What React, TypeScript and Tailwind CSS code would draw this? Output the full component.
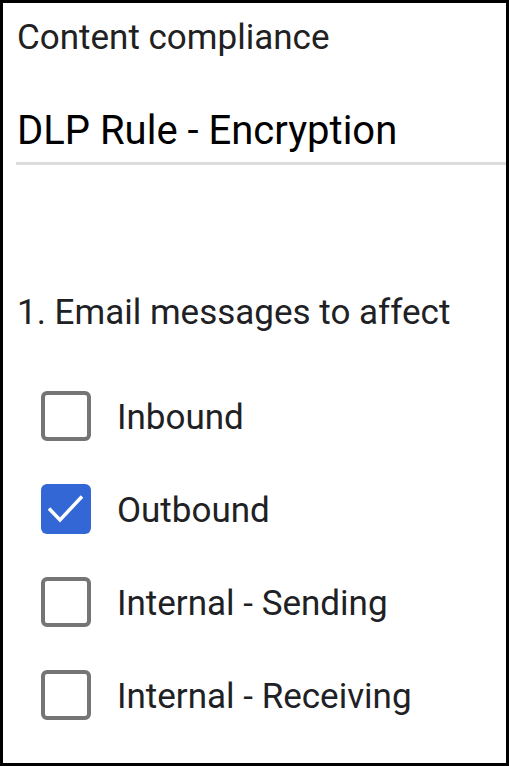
import React from "react";

const options = [
  { label: "Inbound", checked: false },
  { label: "Outbound", checked: true },
  { label: "Internal - Sending", checked: false },
  { label: "Internal - Receiving", checked: false },
];

function Checkbox({ checked }: { checked: boolean }) {
  if (checked) {
    return (
      <div className="w-[50px] h-[50px] rounded-[6px] bg-[#3367d6] flex items-center justify-center shrink-0">
        <svg width="50" height="50" viewBox="0 0 50 50" fill="none">
          <path d="M8 24.5 L19 36 L41 12.5" stroke="#fff" strokeWidth="3.5" />
        </svg>
      </div>
    );
  }
  return (
    <div className="w-[50px] h-[50px] rounded-[6px] border-4 border-[#757575] bg-white shrink-0" />
  );
}

export default function App() {
  return (
    <div
      className="w-[509px] h-[766px] border-[3px] border-black bg-white flex flex-col"
      style={{ fontFamily: "Roboto, 'Liberation Sans', sans-serif" }}
    >
      <div className="pl-[14px] pt-[14px]">
        <div className="text-[35px] leading-[42px] text-[#212121]">
          Content compliance
        </div>
        <div className="mt-[48px] text-[40px] leading-[48px] text-black">
          DLP Rule - Encryption
        </div>
      </div>
      <div className="ml-[13px] mt-[7px] h-[3px] bg-[#dcdcdc]" />
      <div className="pl-[14px] mt-[127px] text-[35px] leading-[42px] text-[#202124]">
        1. Email messages to affect
      </div>
      <div className="flex flex-col pl-[38px] mt-[57px] gap-[43px]">
        {options.map((o) => (
          <div key={o.label} className="flex items-center h-[50px]">
            <Checkbox checked={o.checked} />
            <span className="ml-[26px] pt-[4px] text-[35px] leading-[42px] text-[#202124]">
              {o.label}
            </span>
          </div>
        ))}
      </div>
    </div>
  );
}
